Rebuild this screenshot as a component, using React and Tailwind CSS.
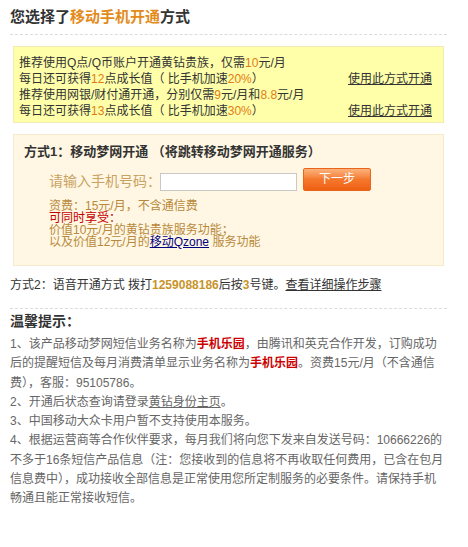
import React from 'react';

const font = { fontFamily: '"Liberation Sans", "Noto Sans CJK SC", sans-serif' };

const Num = ({ children }) => <span className="text-[#e37b14]">{children}</span>;

const Hot = ({ children }) => <span className="font-bold text-[#cc0000]">{children}</span>;

const App = () => {
    const offers = [
        {
            line1: <>推荐使用Q点/Q币账户开通黄钻贵族，仅需<Num>10</Num>元/月</>,
            line2: <>每日还可获得<Num>12</Num>点成长值（ 比手机加速<Num>20%</Num>）</>,
        },
        {
            line1: <>推荐使用网银/财付通开通，分别仅需<Num>9</Num>元/月和<Num>8.8</Num>元/月</>,
            line2: <>每日还可获得<Num>13</Num>点成长值（ 比手机加速<Num>30%</Num>）</>,
        },
    ];

    return (
        <div className="w-[468px] h-[547px] bg-white px-[10px] pt-[8px] text-[12px] text-[#333]" style={font}>
            {/* Title */}
            <h1 className="text-[15px] leading-[18px] font-bold text-[#333]">
                您选择了<span className="text-[#e38b1b]">移动手机开通</span>方式
            </h1>
            <div className="mt-[8px] w-[437px] border-t border-dashed border-[#dcdcdc]" />

            {/* Offers */}
            <div className="mt-[11px] mx-[3px] w-[431px] border border-[#f3eab8] bg-[#ffffaa] pl-[5px] pt-[8px] pb-[3px] leading-[16px]">
                {offers.map((o, i) => (
                    <div key={i} className="flex items-end">
                        <div className="w-[329px]">
                            <div>{o.line1}</div>
                            <div>{o.line2}</div>
                        </div>
                        <a href="#" className="underline text-[#333]">使用此方式开通</a>
                    </div>
                ))}
            </div>

            {/* Method 1 */}
            <div className="mt-[11px] mx-[3px] w-[431px] border border-[#f6e9cc] bg-[#fff7e3] pl-[10px] pt-[9px] pb-[17px]">
                <div className="text-[13px] font-bold leading-[16px] text-[#333]">
                    方式1：移动梦网开通 （将跳转移动梦网开通服务）
                </div>
                <div className="mt-[8px] pl-[25px] flex items-start">
                    <span className="mt-[5px] text-[14px] leading-[16px] text-[#c9a262]">请输入手机号码：</span>
                    <input
                        type="text"
                        className="mt-[5px] ml-[-1px] w-[137px] h-[18px] border border-[#c8c8c8] bg-white outline-none"
                    />
                    <button className="ml-[6px] w-[68px] h-[23px] border border-[#e8661a] rounded-[2px] bg-gradient-to-b from-[#fbb27a] via-[#f4782c] to-[#ee5f12] text-white text-[12px] leading-[21px]">
                        下一步
                    </button>
                </div>
                <div className="mt-[9px] pl-[25px] leading-[12px] text-[#b8893b]">
                    <div>资费：15元/月，不含通信费</div>
                    <div className="text-[#c40000]">可同时享受：</div>
                    <div>价值10元/月的黄钻贵族服务功能；</div>
                    <div>
                        以及价值12元/月的<a href="#" className="underline text-[#000080]">移动Qzone</a> 服务功能
                    </div>
                </div>
            </div>

            {/* Method 2 */}
            <div className="mt-[11px] leading-[16px] text-[#333]">
                方式2：语音开通方式 拨打<span className="font-bold text-[#c8942a]">1259088186</span>后按<span className="font-bold text-[#c8942a]">3</span>号键。<a href="#" className="underline text-[#333]">查看详细操作步骤</a>
            </div>
            <div className="mt-[15px] w-[437px] border-t border-dashed border-[#dcdcdc]" />

            {/* Tips */}
            <h2 className="mt-[3px] text-[14px] leading-[18px] font-bold text-[#333]">温馨提示：</h2>
            <div className="mt-[5px] w-[434px] leading-[19.25px] text-[#666]">
                <p>
                    1、该产品移动梦网短信业务名称为<Hot>手机乐园</Hot>，由腾讯和英克合作开发，订购成功后的提醒短信及每月消费清单显示业务名称为<Hot>手机乐园</Hot>。资费15元/月（不含通信费），客服：95105786。
                </p>
                <p>
                    2、开通后状态查询请登录<a href="#" className="underline text-[#666]">黄钻身份主页</a>。
                </p>
                <p>3、中国移动大众卡用户暂不支持使用本服务。</p>
                <p>
                    4、根据运营商等合作伙伴要求，每月我们将向您下发来自发送号码：10666226的不多于16条短信产品信息（注：您接收到的信息将不再收取任何费用，已含在包月信息费中），成功接收全部信息是正常使用您所定制服务的必要条件。请保持手机畅通且能正常接收短信。
                </p>
            </div>
        </div>
    );
};

export default App;
